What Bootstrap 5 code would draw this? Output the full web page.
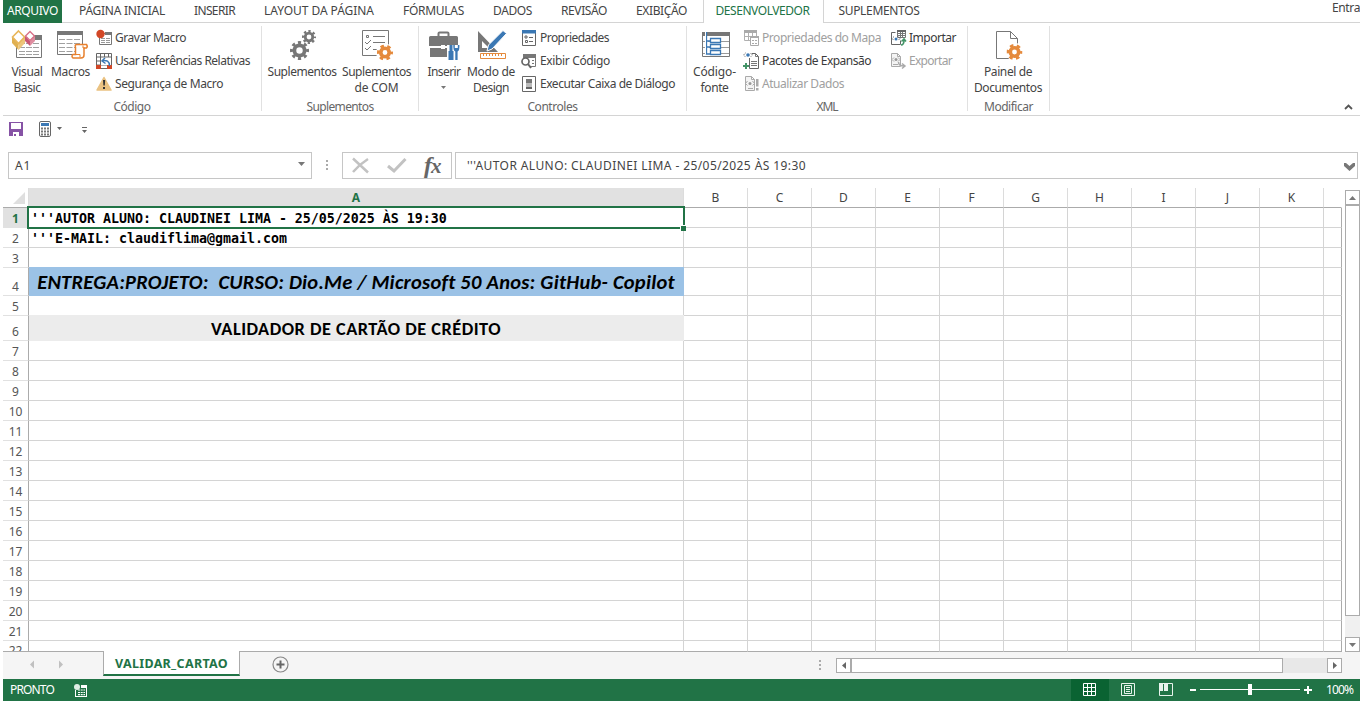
<!DOCTYPE html>
<html lang="pt-BR">
<head>
<meta charset="utf-8">
<title>Validador de Cartão</title>
<link href="https://cdn.jsdelivr.net/npm/bootstrap@5.3.0/dist/css/bootstrap.min.css" rel="stylesheet">
<style>
html,body{height:701px;overflow:hidden}
body{font:12px/16px "Noto Sans","Open Sans",sans-serif;color:#444;background:#fff;width:1360px}
svg{display:block;flex:none;overflow:visible}
[data-w]{white-space:pre;display:inline-block}
.tabs{height:23px}
.tabs>div{padding:0 14.5px;height:23px;line-height:21px;border-bottom:1px solid #d4d4d4}
.tabs>.file-tab{background:#217346;color:#fff;padding:0 4px;width:59px;margin-left:3px;border-color:#217346}
.tabs>.on{color:#217346;border:1px solid #d4d4d4;border-width:0 1px;width:121px;padding:0 12px}
.ribbon{height:93px;margin-left:3px;border-bottom:1px solid #d4d4d4;padding-top:3px}
.group{position:relative;height:85px;border-right:1px solid #e1e1e1}
.group-name{color:#666;position:absolute;bottom:-4px;left:0;right:0;text-align:center;height:16px}
.big{padding-top:4px;text-align:center;height:74px}
.big svg{margin:0 auto 4px}
.smalls>div{height:23px;display:flex;align-items:center;gap:3px}
.dis{color:#a0a0a0}
.qat{height:36px}
.fbar{height:27px}
.fbox{border:1px solid #c6c6c6;height:27px}
.workspace{height:464px;margin:9px 0 0 3px}
.cells{width:1339px;height:464px;display:grid;grid-template-columns:26px 655px repeat(10,64px) 18px;grid-template-rows:20px repeat(3,20px) 28px 20px 25px repeat(15,20px) 11px;overflow:hidden}
.cells>div{border-right:1px solid #d4d4d4;border-bottom:1px solid #d4d4d4;overflow:hidden;color:#444;min-width:0}
.cells>.ch{text-align:center;line-height:20px;border-bottom-color:#ababab;border-right-color:#dcdcdc}
.cells>.rh{border-right-color:#ababab;display:flex;align-items:flex-end;justify-content:center;font-size:12px;line-height:16px;border-bottom-color:#e1e1e1;color:#555}
.cells>.lastcol{border-right-color:#ababab}
.cells>.lastrow{border-bottom-color:#ababab;align-items:flex-start;line-height:20px}
.cells>.hot{background:#e1e1e1;color:#217346;font-weight:700}
.cells>.code{font:bold 13.29px/22px "DejaVu Sans Mono",monospace;color:#000;padding-left:2px}
.cells>.course{background:#9bc2e6;border-color:#9bc2e6;margin-top:-1px;color:#000;font:italic bold 20.500px/31px Carlito,Lato,sans-serif;text-align:center}
.cells>.heading{background:#ececec;border-color:#ececec;margin-top:-1px;color:#000;font:bold 18.300px/28px Carlito,Lato,sans-serif;text-align:center}
.cells>.sel{overflow:visible;position:relative}
.sel::before{content:"";position:absolute;left:-2px;top:-2px;width:658px;height:23px;border:2px solid #217346}
.sel::after{content:"";position:absolute;right:-3px;bottom:-4px;width:6px;height:6px;background:#217346;border:1px solid #fff;border-width:1px 0 0 1px}
.vbar{width:15px;margin:2px 0 0 3px;background:#f0f0f0;height:462px}
.sb{width:15px;height:15px;border:1px solid #ababab;background:#fff;display:flex;align-items:center;justify-content:center}
.sheetbar{height:27px;margin-left:3px;background:#f5f5f5}
.sheet-tab{width:137px;height:25px;margin-top:-1px;background:#fff;border:1px solid #ababab;border-top:0;border-bottom:2px solid #217346;color:#217346;font-weight:700;font-size:12.5px;text-align:center;line-height:26px;position:relative}
.status{height:22px;margin-left:3px;background:#217346;color:#fff}
.cell-view{width:38px;height:22px;background:#0a6332}
</style>
<script src="https://cdn.jsdelivr.net/npm/bootstrap@5.3.0/dist/js/bootstrap.bundle.min.js"></script>
</head>
<body>
<svg width="0" height="0" class="position-absolute">
<symbol id="gear" viewBox="-10 -10 20 20"><circle r="5.4" fill="none" stroke="currentColor" stroke-width="4"/><circle r="8" fill="none" stroke="currentColor" stroke-width="4" pathLength="16" stroke-dasharray="1 1" stroke-dashoffset=".5"/></symbol>
<symbol id="gear6" viewBox="-10 -10 20 20"><circle r="5.3" fill="none" stroke="currentColor" stroke-width="4.6"/><circle r="8" fill="none" stroke="currentColor" stroke-width="4" pathLength="12" stroke-dasharray="1 1" stroke-dashoffset=".5"/></symbol>
</svg>

<nav class="tabs d-flex">
<div class="file-tab"><span data-w="51">ARQUIVO</span></div>
<div style="padding-left:17px"><span data-w="86">PÁGINA INICIAL</span></div>
<div><span data-w="41">INSERIR</span></div>
<div><span data-w="110">LAYOUT DA PÁGINA</span></div>
<div><span data-w="61">FÓRMULAS</span></div>
<div><span data-w="39">DADOS</span></div>
<div><span data-w="46">REVISÃO</span></div>
<div style="padding-right:15.5px"><span data-w="51">EXIBIÇÃO</span></div>
<div class="on"><span data-w="94">DESENVOLVEDOR</span></div>
<div style="padding-left:15px"><span data-w="81">SUPLEMENTOS</span></div>
<div class="flex-grow-1 text-end pe-0" style="line-height:16px"><span data-w="28">Entra</span></div>
</nav>

<section class="ribbon d-flex">
<div class="group d-flex" style="width:259px">
 <div class="big" style="width:48px">
  <svg width="32" height="30" viewBox="0 0 32 30"><path d="M5.5 7.5H30.500V27.500H5.500Z" fill="#fff" stroke="#777"/><path d="M22 5h9v5h-9z" fill="#777"/><path d="M8 13.500h20M8 17.500h20M8 21.500h20M8 24.500h20" stroke="#a0a0a0" stroke-dasharray="6 1"/><path d="M1 7v6l6.500 7V14Z" fill="#e0b050"/><path d="M7.500 14v6l6.500-7V7Z" fill="#edc57a"/><path d="M7.500 1 13.500 7 7.500 13.500 1.500 7Z" fill="#fff" stroke="#e8b65a" stroke-width="1.600"/><path d="M14 6v5l5 5v-5Z" fill="#c95673"/><path d="M19 11v5l5-5V6Z" fill="#df8da0"/><path d="M19 1.500 23.500 6 19 10.500 14.500 6Z" fill="#fff" stroke="#d87087" stroke-width="1.400"/></svg>
  <span data-w="31">Visual</span><br><span data-w="27">Basic</span></div>
 <div class="big" style="width:39px;margin-right:6px">
  <svg width="32" height="30" viewBox="0 0 32 30"><path d="M2.500 1.500h25v23h-25z" fill="#fff" stroke="#777"/><path d="M2 1h26v4H2z" fill="#777"/><path d="M4 9.500h22M4 13.500h22M4 17.500h22M4 21.500h22" stroke="#a0a0a0" stroke-dasharray="6 1.500"/><path d="M21.500 14.500h10q1.500 2 0 3.500h-2.500v7q0 3-3 3h-8q-2-2 0-3.500h2.500V17q-1-2 1-2.500Z" fill="#fff" stroke="#e8812f" stroke-width="1.500"/><path d="M30 18h-2v-2.500M18 24.500h7v3" fill="none" stroke="#e8812f"/></svg>
  <span data-w="39">Macros</span></div>
 <div class="smalls">
  <div><svg width="16" height="16" viewBox="0 0 16 16"><path d="M3.500 3.500h12v11h-12z" fill="#fff" stroke="#777"/><path d="M9 2h7v3H9z" fill="#777"/><path d="M5 8.500h9M5 10.500h9M5 12.500h9" stroke="#999" stroke-dasharray="4 1"/><circle cx="4.500" cy="4" r="4.200" fill="#d24726"/></svg><span data-w="71">Gravar Macro</span></div>
  <div><svg width="16" height="16" viewBox="0 0 16 16"><path d="M.5.500h15v15H.500zM.500 4h15M4.500 0v16M8.500 0v4M12.500 0v4M0 8h4M0 12h16" fill="#fff" stroke="#666"/><path d="M5 5h10v7H5z" fill="#fff"/><path d="M0 12h5v4H0zM11 12h5v4h-5z" fill="#d24726"/><path d="M13.500 13c0-5-3-6-7-5.500M9 5 6 8l3.500 2.500" fill="none" stroke="#3b78b4" stroke-width="1.500"/></svg><span data-w="135">Usar Referências Relativas</span></div>
  <div><svg width="16" height="16" viewBox="0 0 16 16"><path d="M8 1.500 15 14H1Z" fill="#eac282" stroke="#eac282" stroke-width="1.500" stroke-linejoin="round"/><path d="M7 4h2.200l-.4 5.500H7.400zM7 11h2v2H7z" fill="#333"/></svg><span data-w="108">Segurança de Macro</span></div>
 </div>
 <div class="group-name"><span data-w="37">Código</span></div>
</div>
<div class="group d-flex" style="width:157px">
 <div class="big" style="width:77px;padding-left:3px">
  <svg width="32" height="30" viewBox="0 0 32 30" color="#777"><use href="#gear" x="4" y="11" width="19" height="19"/><use href="#gear" x="16" y="0" width="14" height="14"/></svg>
  <span data-w="69">Suplementos</span></div>
 <div class="big" style="width:75px">
  <svg width="32" height="30" viewBox="0 0 32 30"><path d="M1.500.500h26v25h-26z" fill="#fff" stroke="#777"/><path d="M5.500 5.500h2v2h-2zM4 12l2 2 4-4M4 18l2 2 4-4M12 6.500h12M12 12.500h12M12 19.500h6" fill="none" stroke="#777"/><circle cx="24" cy="22.500" r="9" fill="#fff"/><use href="#gear6" x="16" y="14.500" width="16" height="16" color="#e58a3c"/></svg>
  <span data-w="69">Suplementos</span><br><span data-w="44">de COM</span></div>
 <div class="group-name"><span data-w="67">Suplementos</span></div>
</div>
<div class="group d-flex" style="width:268px">
 <div class="big" style="width:46px;padding-left:4px">
  <svg width="32" height="30" viewBox="0 0 32 30"><path d="M10.500 6V3.500q0-1 1-1h8q1 0 1 1V6" fill="none" stroke="#777" stroke-width="2"/><path d="M1 7.500q0-1.500 1.500-1.500h26q1.500 0 1.500 1.500V16H1zM2 18h28v9H2z" fill="#777"/><path d="M13 15h4v4h-4z" fill="#fff"/><path d="M19 15h12v15H19z" fill="#fff"/><path d="M21.500 15h3v6h1v9h-5v-9h1zM27.300 30v-8.500q-2.300-1-2-6.500h1.500v3h3v-3h1.600q.4 5.500-1.800 6.500v8.500z" fill="#3b78b4"/></svg>
  <span data-w="33">Inserir</span><svg width="5" height="3" viewBox="0 0 5 3" style="margin:6px auto 0 18px"><path d="M0 0h5L2.500 3z" fill="#777"/></svg></div>
 <div class="big" style="width:52px;margin-right:4px">
  <svg width="32" height="30" viewBox="0 0 32 30"><path fill-rule="evenodd" d="M3 1 23 22H3zM7 11v7h7z" fill="#777"/><path d="m12 21 1.500-6L28 .5l3.500 3L17 19Z" fill="#3b78b4" stroke="#fff"/><path d="M5.500 23.500h25v5h-25z" fill="#fff" stroke="#e58a3c"/><path d="M8.500 24v2m3-2v2m3-2v2m3-2v2m3-2v2m3-2v2m3-2v2" stroke="#e58a3c"/></svg>
  <span data-w="48">Modo de</span><br><span data-w="36">Design</span></div>
 <div class="smalls">
  <div><svg width="16" height="16" viewBox="0 0 16 16"><path d="M1.500.500h13v15h-13z" fill="#fff" stroke="#666"/><path d="M1 0h14v3.500H1z" fill="#3b78b4"/><path d="M4 6h2v2H4zM4.500 10.500h2v2h-2zM8 7.500h4M8 11.500h4" fill="none" stroke="#666"/></svg><span data-w="69">Propriedades</span></div>
  <div><svg width="16" height="16" viewBox="0 0 16 16"><path d="M3 1.500h11.500v12H9" fill="none" stroke="#777"/><path d="M2 1h13v4H2z" fill="#777"/><path d="M11 7.500h2M11 10.500h2" stroke="#777"/><circle cx="4.500" cy="8.500" r="3.500" fill="#fff" stroke="#666" stroke-width="1.700"/><path d="m7 11 3 4" stroke="#666" stroke-width="2"/></svg><span data-w="70">Exibir Código</span></div>
  <div><svg width="16" height="16" viewBox="0 0 16 16"><path d="M1.500.500h13v15h-13z" fill="#fff" stroke="#666"/><path d="M5 3h6v4H5z" fill="#777"/><path d="M5 7h6v4H5z" fill="#bbb"/><path d="M5 11h6v2H5z" fill="#666"/></svg><span data-w="135">Executar Caixa de Diálogo</span></div>
 </div>
 <div class="group-name"><span data-w="50">Controles</span></div>
</div>
<div class="group d-flex" style="width:281px">
 <div class="big" style="width:55px;margin-right:1px">
  <svg width="32" height="30" viewBox="0 0 32 30"><path d="M3.500 2.500h27v24h-27z" fill="#fff" stroke="#777"/><path d="M3 2h28v4H3z" fill="#777"/><path d="M4 11.500h26M4 17.500h26M4 23.500h26" stroke="#999"/><path d="M7.500 2v22H11M7.500 11H11M7.500 17H11M11.500 8.500h10v4h-10zM11.500 14.500h10v4h-10zM11.500 20.500h10v4h-10z" fill="#fff" stroke="#3b78b4" stroke-width="1.300"/><path d="M6.500 2v22" stroke="#fff"/></svg>
  <span data-w="43">Código-</span><br><span data-w="28">fonte</span></div>
 <div class="smalls" style="width:147px">
  <div class="dis"><svg width="16" height="16" viewBox="0 0 16 16"><path d="M1.500 1.500h12v9h-12zM1 6.500h12M5.500 2v9M9.500 2v9" fill="#fff" stroke="#b0b0b0"/><path d="M1 0h13v3H1z" fill="#aaa"/><path d="M7.500 6.500h8v9h-8z" fill="#fff" stroke="#aaa"/><path d="M7 6h9v2H7zM9 10h2v1H9zM9 13h2v1H9zM12 10h2v1h-2zM12 13h2v1h-2z" fill="#aaa"/></svg><span data-w="119">Propriedades do Mapa</span></div>
  <div style="color:#3a3a3a"><svg width="16" height="16" viewBox="0 0 16 16"><path d="M6.500 5v10.500h9v-12l-3-3H9" fill="#fff" stroke="#666"/><path d="M12.500.500v3h3M8 8.500h6M8 10.500h6M8 12.500h6" fill="none" stroke="#777"/><path d="m2.500 0-2 2 2 2m5-4 2 2-2 2" fill="none" stroke="#444" stroke-dasharray="1 1"/><circle cx="5" cy="2" r="1.800" fill="#3b78b4"/><path d="M0 13h6M3 10v6" stroke="#439467" stroke-width="2"/></svg><span data-w="109">Pacotes de Expansão</span></div>
  <div class="dis"><svg width="16" height="16" viewBox="0 0 16 16"><path d="M2.500.500h6l3 3v11h-9zM8.500.500v3h3" fill="#f4f4f4" stroke="#aaa"/><path d="m4.500 5-2 2.500 2 2m5-4.500 2 2.500-2 2M5 12.500h5" fill="none" stroke="#aaa"/><circle cx="7" cy="7.500" r="1.500" fill="#999"/><path d="M13 3h2.500v7.500H13zM13 12h2.500v2.500H13z" fill="#aaa"/></svg><span data-w="82">Atualizar Dados</span></div>
 </div>
 <div class="smalls">
  <div style="color:#3a3a3a"><svg width="16" height="16" viewBox="0 0 16 16"><path d="M1.500 2.500h4M1.500 2.500v12h9v-4" fill="none" stroke="#666"/><path d="M7.500.500h8v7h-8zM7 3.500h9M7 5.500h9M10.500 1v7M12.500 1v7" fill="#fff" stroke="#777"/><path d="M7 0h9v2H7z" fill="#666"/><path d="m4 6.500-2 2 2 2m4-4 2 2-2 2" fill="none" stroke="#444" stroke-dasharray="1 1"/><circle cx="6" cy="9" r="1.500" fill="#3b78b4"/><path d="M11 15q3 0 3-5M11.500 11.500 14 9l2 2.500" fill="none" stroke="#439467" stroke-width="1.600"/></svg><span data-w="47">Importar</span></div>
  <div class="dis"><svg width="16" height="16" viewBox="0 0 16 16"><path d="M1.500.500h6l3 3v10h-9zM7.500.500v3h3" fill="#f4f4f4" stroke="#aaa"/><path d="m4 4.500-2 2 2 2m4-4 2 2-2 2M3 11.500h5" fill="none" stroke="#aaa"/><circle cx="6" cy="6.500" r="1.500" fill="#999"/><path d="M8.500 9q0 4 5.500 4M12 10.500l3 2.500-3 2.500" fill="none" stroke="#aaa" stroke-width="1.500"/></svg><span data-w="43">Exportar</span></div>
 </div>
 <div class="group-name"><span data-w="21">XML</span></div>
</div>
<div class="group d-flex" style="width:82px">
 <div class="big" style="width:80px">
  <svg width="32" height="30" viewBox="1 0 32 30"><path d="M5.500 1.500h14l7 7v20h-21zM19.500 1.500v7h7" fill="#fff" stroke="#777"/><circle cx="24" cy="22" r="9" fill="#fff"/><use href="#gear6" x="15.500" y="14" width="16" height="16" color="#e58a3c"/></svg>
  <span data-w="48">Painel de</span><br><span data-w="68">Documentos</span></div>
 <div class="group-name"><span data-w="49">Modificar</span></div>
</div>
<svg class="ms-auto align-self-end" width="9" height="6" viewBox="0 0 9 6" style="margin:0 7px 5px 0"><path d="M1 5 4.500 1.500 8 5" fill="none" stroke="#555" stroke-width="1.800"/></svg>
</section>

<div class="qat d-flex" style="padding:5px 0 0 9px">
<svg width="14" height="16" viewBox="0 0 14 16"><path d="M0 1h14v14H0z" fill="#8653a5"/><path d="M2 2h10v6H2zM4 11h6v4H7v-2H5v2H4z" fill="#fff"/></svg>
<svg width="12" height="16" viewBox="0 0 12 16" style="margin-left:16px"><rect x=".5" y=".5" width="11" height="15" rx="1.500" fill="#fff" stroke="#666"/><path d="M2 2h8v3H2z" fill="#3b78b4"/><path d="M2 7.500h8M2 10.500h8M2 13.500h8" stroke="#777" stroke-width="1.800" stroke-dasharray="2 1"/></svg>
<svg width="5" height="3" viewBox="0 0 5 3" style="margin:6px 0 0 6px"><path d="M0 0h5L2.500 3z" fill="#666"/></svg>
<svg width="5" height="6" viewBox="0 0 5 6" style="margin:6px 0 0 20px"><path d="M0 0h5v1H0zM0 3h5L2.500 6z" fill="#666"/></svg>
</div>

<div class="fbar d-flex">
<div class="fbox d-flex justify-content-between" style="width:304px;margin-left:8px;padding:0 6px;line-height:26px"><span data-w="16">A1</span><svg width="7" height="4" viewBox="0 0 7 4" style="margin-top:9px"><path d="M0 0h7L3.500 4z" fill="#777"/></svg></div>
<svg width="2" height="10" viewBox="0 0 2 10" style="margin:8px 14px 0"><path d="M0 0h2v2H0zM0 4h2v2H0zM0 8h2v2H0z" fill="#aaa"/></svg>
<div class="fbox d-flex align-items-center" style="width:110px;padding-left:9px">
<svg width="17" height="15" viewBox="0 0 17 15"><path d="M1 .5 16 14.500M16 1Q8 6 1 14" fill="none" stroke="#c2c2c2" stroke-width="2.500"/></svg>
<svg width="20" height="15" viewBox="0 0 20 15" style="margin-left:18px"><path d="m1 8 6 5L18.500 1" fill="none" stroke="#c2c2c2" stroke-width="3"/></svg>
<span style="font:italic bold 24px/24px 'Liberation Serif',serif;color:#666;margin:-1px 0 0 17px;letter-spacing:-1px"><i>f</i><i style="font-size:21px">x</i></span></div>
<div class="fbox d-flex justify-content-between" style="width:903px;margin-left:3px;padding:0 2px 0 11px;line-height:26px"><span data-w="339">'''AUTOR ALUNO: CLAUDINEI LIMA - 25/05/2025 ÀS 19:30</span><svg width="11" height="8" viewBox="0 0 11 8" style="margin-top:10px"><path d="M0 0h2l3.500 3L9 0h2v3L5.500 8 0 3z" fill="#777"/></svg></div>
</div>

<main class="workspace d-flex">
<div class="cells" id="cells"></div>
<div class="vbar d-flex flex-column"><div class="sb"><svg width="7" height="4" viewBox="0 0 7 4"><path d="M0 4h7L3.500 0z" fill="#777"/></svg></div><div class="sb" style="height:411px"></div><div class="sb mt-auto"><svg width="7" height="4" viewBox="0 0 7 4"><path d="M0 0h7L3.500 4z" fill="#777"/></svg></div></div>
</main>

<div class="sheetbar d-flex">
<svg width="100" height="27" viewBox="0 0 100 27"><path d="M31 8.500v8l-4-4zM56 8.500v8l4-4z" fill="#c0c0c0"/></svg>
<div class="sheet-tab"><span data-w="113">VALIDAR_CARTAO</span></div>
<svg width="17" height="17" viewBox="0 0 17 17" style="margin:4px 1px 0 32px"><circle cx="8.500" cy="8.500" r="7.500" fill="none" stroke="#888" stroke-width="1.200"/><path d="M4.500 8.500h8M8.500 4.500v8" stroke="#666" stroke-width="2"/></svg>
<svg width="2" height="10" viewBox="0 0 2 10" style="margin:8px 0 0 529px"><path d="M0 0h2v2H0zM0 4h2v2H0zM0 8h2v2H0z" fill="#ababab"/></svg>
<div class="d-flex" style="margin:6px 0 0 15px;width:506px;height:15px;background:#e8e8e8"><div class="sb"><svg width="4" height="7" viewBox="0 0 4 7"><path d="M4 0v7L0 3.500z" fill="#666"/></svg></div><div class="sb" style="width:432px"></div><div class="sb ms-auto"><svg width="4" height="7" viewBox="0 0 4 7"><path d="M0 0v7l4-3.500z" fill="#666"/></svg></div></div>
</div>

<footer class="status d-flex align-items-center">
<span data-w="44" style="margin-left:7px">PRONTO</span>
<svg width="13" height="13" viewBox="0 0 13 13" style="margin-left:20px"><path d="M7 1h6v3H7zM1 6h1v7H1zM12 4h1v9h-1zM1 12h12v1H1z" fill="#fff"/><path d="M4 6h7M4 8.500h7M4 10.700h7" stroke="#fff" stroke-width="1.200" stroke-dasharray="2 .7"/><circle cx="3" cy="3" r="3" fill="#e0eee5"/></svg>
<div class="cell-view d-flex align-items-center" style="margin-left:984px;padding-left:12px"><svg width="13" height="13" viewBox="0 0 13 13" style="margin-top:-1px"><path d="M.5.500h12v12H.500zM4.500 0v13M8.500 0v13M0 4.500h13M0 8.500h13" fill="none" stroke="#fff"/></svg></div>
<svg width="14" height="13" viewBox="0 0 14 13" style="margin:-1px 0 0 12px"><path d="M.5.500h13v12H.500zM3.500 2.500h7v8h-7zM5 4.500h4M5 6.500h4M5 8.500h4" fill="none" stroke="#e8f3ec"/></svg>
<svg width="14" height="13" viewBox="0 0 14 13" style="margin:-1px 0 0 24px"><path d="M.5.500h13v12H.500z" fill="none" stroke="#e8f3ec"/><path d="M0 0h4v8H0zM5 0h4v8H5z" fill="#e8f3ec"/></svg>
<svg width="122" height="14" viewBox="0 0 122 14" style="margin-left:17px"><path d="M0 6h6v2H0zM10 6h100v1H10zM58 1h4v11h-4zM114 6h8v2h-8zM117 3h2v8h-2z" fill="#fff"/></svg>
<span data-w="27" style="margin-left:14px">100%</span>
</footer>

<script>
const grid=document.getElementById('cells');
const add=(cls,html)=>{const d=document.createElement('div');d.className=cls;d.innerHTML=html||'';grid.append(d)};
const content={1:['code sel',"'''AUTOR ALUNO: CLAUDINEI LIMA - 25/05/2025 ÀS 19:30"],2:['code',"'''E-MAIL: claudiflima@gmail.com"],4:['course','<span data-w="637">ENTREGA:PROJETO:  CURSO: Dio.Me / Microsoft 50 Anos: GitHub- Copilot</span>'],6:['heading','<span data-w="290">VALIDADOR DE CARTÃO DE CRÉDITO</span>']};
add('ch','<svg width="12" height="12" viewBox="0 0 12 12" style="margin:4px 0 0 10px"><path d="M12 0v12H0z" fill="#dfdfdf"/></svg>');
'ABCDEFGHIJK'.split('').forEach(c=>add('ch'+(c==='A'?' hot':''),c));
add('ch','');
grid.lastChild.style.borderRightColor='#fff';
for(let r=1;r<=22;r++){
  const end=r===22?' lastrow':'';
  add('rh'+(r===1?' hot':'')+end,r);
  const c=content[r]||['',''];
  add(c[0]+end,c[1]);
  for(let i=0;i<10;i++)add(end);
  add('lastcol'+end);
}
// Fit each label to its design width
document.querySelectorAll('[data-w]').forEach(e=>{
  const n=e.textContent.length,w=e.getBoundingClientRect().width;
  e.style.letterSpacing=((+e.dataset.w-w)/n)+'px';
});
</script>
</body>
</html>
